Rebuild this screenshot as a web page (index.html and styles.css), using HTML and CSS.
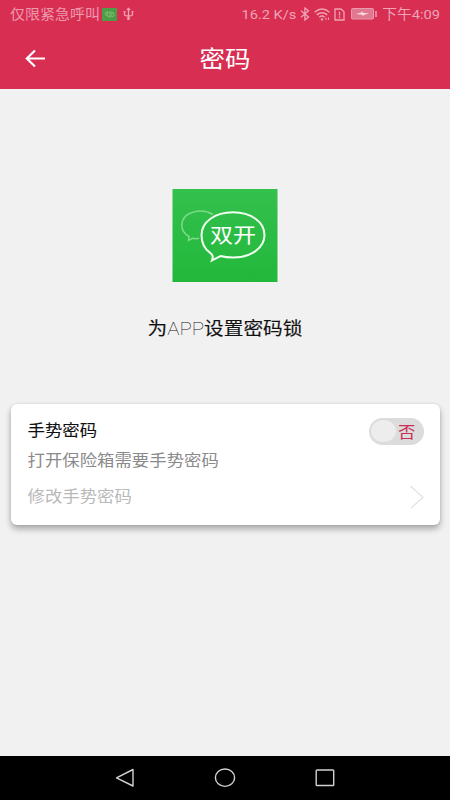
FILE: index.html
```html
<!DOCTYPE html>
<html lang="zh-CN">
<head>
<meta charset="utf-8">
<title>密码</title>
<link rel="stylesheet" href="styles.css">
</head>
<body>
<div class="screen">
  <header class="top">
    <div class="status">
      <span class="text carrier">仅限紧急呼叫</span>
      <svg class="app-mini" width="15" height="13" viewBox="0 0 15 13"><rect width="15" height="13" fill="#4d9d48"/><g fill="none" stroke="#8fc67f" stroke-width=".8"><path d="M5 7.500C2 6 3.200 3.500 6 4"/><ellipse cx="8.500" cy="6.500" rx="3.600" ry="2.500"/><path d="M7 6h3.500M7.500 7.300h2"/></g></svg>
      <svg class="usb" width="11" height="14" viewBox="0 0 11 14" fill="none" stroke="#efa3b5" stroke-width="1.300"><path d="M5.500 2v9M1.500 5v2.500Q1.500 9 5.500 9Q9.500 9 9.500 7.500V5"/><path d="M4 2.700L5.500 .8 7 2.700zM.4 4.600h2.200M8.400 4.600h2.200" fill="#efa3b5" stroke-width="1"/><circle cx="5.500" cy="11.600" r="1.500" fill="#efa3b5" stroke="none"/></svg>
      <span class="text speed">16.2 K/s</span>
      <svg class="bt" width="10" height="14" viewBox="0 0 10 14" fill="none" stroke="#efa3b5" stroke-width="1.300"><path d="M1 3.800l7.500 6.200-3.600 3V1l3.600 2.800L1 10.200"/></svg>
      <svg class="wifi" width="16" height="13" viewBox="0 0 16 13" fill="none" stroke="#efa3b5" stroke-width="1.400"><path d="M.6 4.300Q8-2.200 15.400 4.300M2.800 6.900Q8 2.400 13.200 6.900M5.200 9.300Q8 6.900 10.600 9.300"/><circle cx="8" cy="11.400" r="1.200" fill="#efa3b5" stroke="none"/><path d="M12 9.500v2.500M14.500 9.500v2.500" stroke-width="1"/></svg>
      <svg class="sim" width="11" height="13" viewBox="0 0 11 13" fill="none" stroke="#efa3b5" stroke-width="1.300"><path d="M1 1h6l3 2.800V12H1zM5.500 3.700v3.800M5.500 8.600v1.700"/></svg>
      <svg class="battery" width="26" height="12" viewBox="0 0 26 12"><rect x=".5" y=".5" width="22" height="10.500" rx="1" fill="#e0788f" stroke="#eb99ac"/><path d="M5 6l5.500-1.500V3l1.500 1.700L18 5.500l-5.500 1.400V8.500L11 6.700z" fill="#fbdde4"/><path d="M25 3v6" stroke="#efa3b5" stroke-width="1.500"/></svg>
      <span class="text clock">下午4:09</span>
    </div>
    <div class="bar">
      <svg class="back" width="22" height="20" viewBox="0 0 22 20" fill="none" stroke="#fff" stroke-width="2.200"><path d="M10 1.500L1.800 9.500l8.200 8M1.800 9.500h18.200"/></svg>
      <h1 class="text">密码</h1>
    </div>
  </header>
  <main class="content">
    <svg class="logo" width="106" height="93" viewBox="0 0 106 93">
      <defs><linearGradient id="green" x1="0" y1="0" x2="0" y2="1"><stop offset="0" stop-color="#34c04d"/><stop offset="1" stop-color="#22b83b"/></linearGradient></defs>
      <rect x=".5" width="105" height="93" fill="url(#green)"/>
      <path d="M41 25.500C30 19 9.800 22 9.800 36.500C9.800 41.500 12 44.500 17 47.500L16.500 51.500L20.500 49.300Q24 50 27 49.200" fill="none" stroke="#7edb86" stroke-width="1.500"/>
      <path d="M38.500 64.200C33 60.500 29.500 54.500 29.500 46C29.500 33 43 23.300 61 23.300S92.500 33 92.500 46S79 68.500 61 68.500Q54 68.500 48.500 67L40 71.300Q42 66.500 38.500 64.200Z" fill="none" stroke="#effff0" stroke-width="2"/>
      <text class="logo-text" transform="translate(38 54.200) scale(1 .9)">双开</text>
    </svg>
    <p class="text caption">为<span class="latin">APP</span>设置密码锁</p>
    <section class="card">
      <div class="row primary">
        <span class="text label">手势密码</span>
        <span class="switch"><i class="knob"></i><span class="text state">否</span></span>
      </div>
      <div class="row desc"><span class="text">打开保险箱需要手势密码</span></div>
      <div class="row modify">
        <span class="text">修改手势密码</span>
        <svg width="15" height="24" viewBox="0 0 15 24" fill="none" stroke="#e2e2e2" stroke-width="1.200"><path d="M1.500 1l12.500 11.500L2 23"/></svg>
      </div>
    </section>
  </main>
  <nav class="nav">
    <svg width="20" height="20" viewBox="0 0 20 20"><path d="M18 1.500v16.500L1.500 9.800z"/></svg>
    <svg width="22" height="20" viewBox="0 0 22 20"><ellipse cx="11" cy="9.700" rx="9.600" ry="8.700"/></svg>
    <svg width="20" height="20" viewBox="0 0 20 20"><rect x="1.200" y="2" width="17.500" height="15.500" rx=".8"/></svg>
  </nav>
</div>
</body>
</html>
```
FILE: styles.css
```css
* { box-sizing: border-box; }
body {
  margin: 0;
  font-family: Roboto, "Noto Sans CJK SC", sans-serif;
  background: #f1f1f1;
}
.screen { width: 450px; height: 800px; display: flex; flex-direction: column; overflow: hidden; }
.text { display: inline-block; white-space: nowrap; transform: scaleY(.9); }
svg { display: block; flex: none; }

.top { height: 89px; background: #d82e52; }
.status { height: 28px; padding: 0 10px; display: flex; align-items: center; font-size: 15px; line-height: 20px; color: #efa3b5; }
.carrier { width: 92px; color: #ed9aae; }
.usb { margin-left: 6px; }
.speed { margin-left: auto; font-size: 14.6px; }
.bt { margin-left: 4px; }
.wifi { margin-left: 4px; }
.sim { margin-left: 4px; }
.battery { margin-left: 6px; }
.clock { margin-left: 5px; font-size: 14.7px; }
.bar { height: 61px; display: grid; grid-template-columns: 1fr auto 1fr; align-items: center; padding: 0 25px; }
.bar h1 { margin: 0; font-size: 25.5px; line-height: 32px; font-weight: 400; color: #fff; }

.content { flex: 1; display: flex; flex-direction: column; align-items: center; padding-top: 100px; }
.logo-text { font-size: 23px; fill: #fff; }
.caption { margin: 33px 0 0; font-size: 19.7px; line-height: 28px; font-weight: 400; color: #111; -webkit-text-stroke: .15px #111; }
.latin { font-size: 20.5px; font-weight: 100; -webkit-text-stroke: 0; }
.card {
  width: 429px;
  height: 121px;
  margin-top: 60px;
  padding: 12px 16px 0 17px;
  border-radius: 6px;
  background: #fff;
  box-shadow: 0 4px 6px rgba(0, 0, 0, .3), 0 0 3px rgba(0, 0, 0, .1);
  font-size: 17.4px;
  line-height: 28px;
}
.row { display: flex; align-items: center; justify-content: space-between; height: 30px; }
.label { color: #111; -webkit-text-stroke: .1px #111; }
.desc { color: #8a8a8a; }
.modify { color: #b9b9b9; height: 42px; }
.switch { display: flex; align-items: center; width: 55px; height: 27px; padding: 0 8px 0 2px; border-radius: 14px; background: #dcdcdc; color: #c82e55; justify-content: space-between; }
.state { padding-top: 3px; }
.knob { width: 25px; height: 22px; border-radius: 50%; background: #ededed; }

.nav { height: 44px; background: #000; display: flex; align-items: center; justify-content: center; gap: 79px; }
.nav svg { fill: none; stroke: #d2d2d2; stroke-width: 1.4; stroke-linejoin: round; }
```
